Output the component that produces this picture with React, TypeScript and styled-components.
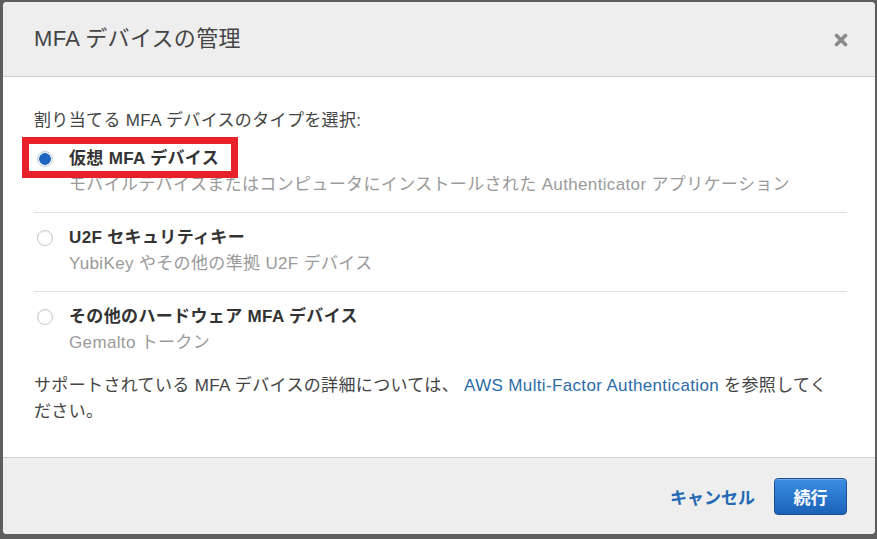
import React, { ReactElement } from "react";
import styled, { createGlobalStyle } from "styled-components";

const GlobalStyle = createGlobalStyle`
  html, body {
    margin: 0;
    padding: 0;
    background: #5e5e5e;
    font-family: "Liberation Sans", "Noto Sans CJK JP", sans-serif;
  }
`;

const options = [
  {
    title: "仮想 MFA デバイス",
    sub: "モバイルデバイスまたはコンピュータにインストールされた Authenticator アプリケーション",
    checked: true,
  },
  {
    title: "U2F セキュリティキー",
    sub: "YubiKey やその他の準拠 U2F デバイス",
    checked: false,
  },
  {
    title: "その他のハードウェア MFA デバイス",
    sub: "Gemalto トークン",
    checked: false,
  },
];

export default function App(): ReactElement {
  return (
    <>
      <GlobalStyle />
      <Modal>
        <Header>
          <Title>MFA デバイスの管理</Title>
          <Close aria-label="閉じる">
            <svg width="14" height="14" viewBox="0 0 14 14">
              <path d="M2.5 2.5 L11.5 11.5 M11.5 2.5 L2.5 11.5" stroke="#8a8a8a" strokeWidth="3.6" strokeLinecap="round" />
            </svg>
          </Close>
        </Header>
        <Body>
          <Intro>割り当てる MFA デバイスのタイプを選択:</Intro>
          {options.map((o, i) => (
            <Option key={o.title} first={i === 0} last={i === options.length - 1}>
              <RadioCell>
                <Radio checked={o.checked} />
              </RadioCell>
              <Label>
                {o.title}
                {o.checked && <Highlight />}
              </Label>
              <span />
              <Sub>{o.sub}</Sub>
            </Option>
          ))}
          <Note>
            サポートされている MFA デバイスの詳細については、 <Link>AWS Multi-Factor Authentication</Link> を参照してください。
          </Note>
        </Body>
        <Footer>
          <CancelButton>キャンセル</CancelButton>
          <PrimaryButton>続行</PrimaryButton>
        </Footer>
      </Modal>
    </>
  );
}

const Modal = styled.div`
  margin: 2px 2px 0 3px;
  height: 532px;
  background: #fff;
  border-radius: 4px;
  overflow: hidden;
  display: flex;
  flex-direction: column;
`;

const Header = styled.div`
  height: 74px;
  flex-shrink: 0;
  background: #eeeeee;
  border-bottom: 1px solid #cfcfcf;
  display: flex;
  align-items: center;
  justify-content: space-between;
  padding: 0 27px 0 31px;
`;

const Title = styled.div`
  font-size: 22px;
  color: #444;
  line-height: 28px;
  letter-spacing: 0.3px;
`;

const Close = styled.div`
  width: 14px;
  height: 14px;
  display: flex;
  margin-top: 2px;
`;

const Body = styled.div`
  flex: 1;
  padding: 31px 28px 0 31px;
  font-size: 17px;
  line-height: 26px;
  letter-spacing: 0.35px;
  color: #444;
`;

const Intro = styled.div`
  margin-bottom: 12px;
`;

const Option = styled.div<{ first: boolean; last: boolean }>`
  display: grid;
  grid-template-columns: 35px 1fr;
  padding-top: ${(p) => (p.first ? "0" : "12px")};
  padding-bottom: ${(p) => (p.last ? "17px" : "14px")};
  border-bottom: ${(p) => (p.last ? "none" : "1px solid #e2e2e2")};
`;

const RadioCell = styled.div`
  display: flex;
  align-items: center;
  padding-left: 3px;
`;

const Radio = styled.span<{ checked: boolean }>`
  flex-shrink: 0;
  width: 16px;
  height: 16px;
  box-sizing: border-box;
  border-radius: 50%;
  border: 1px solid ${(p) => (p.checked ? "#b9c9dd" : "#c6c6c6")};
  background: ${(p) => (p.checked ? "radial-gradient(circle, #1f66c1 0 5.5px, #fff 6.2px)" : "#fff")};
  box-shadow: inset 0 1px 1px rgba(0, 0, 0, 0.06);
`;

const Label = styled.div`
  position: relative;
  font-weight: bold;
  color: #333;
`;

const Highlight = styled.span`
  position: absolute;
  left: -47px;
  top: -9px;
  width: 216px;
  height: 41px;
  box-sizing: border-box;
  border: 7px solid #e8202a;
  pointer-events: none;
`;

const Sub = styled.div`
  color: #9a9a9a;
`;

const Note = styled.div`
  padding-right: 10px;
`;

const Link = styled.a`
  color: #2b6ca8;
  text-decoration: none;
`;

const Footer = styled.div`
  height: 76px;
  flex-shrink: 0;
  background: #eeeeee;
  border-top: 1px solid #cfcfcf;
  display: flex;
  align-items: center;
  justify-content: flex-end;
  gap: 19px;
  padding: 0 28px 0 0;
  font-size: 17px;
`;

const CancelButton = styled.span`
  color: #2369b3;
  font-weight: bold;
`;

const PrimaryButton = styled.button`
  height: 37px;
  width: 73px;
  border-radius: 4px;
  border: 1px solid #1a4f92;
  background: linear-gradient(#3a8ee2, #1b63b9);
  color: #fff;
  font-family: inherit;
  font-size: 17px;
  font-weight: bold;
  box-shadow: inset 0 1px 0 rgba(255, 255, 255, 0.25);
`;
